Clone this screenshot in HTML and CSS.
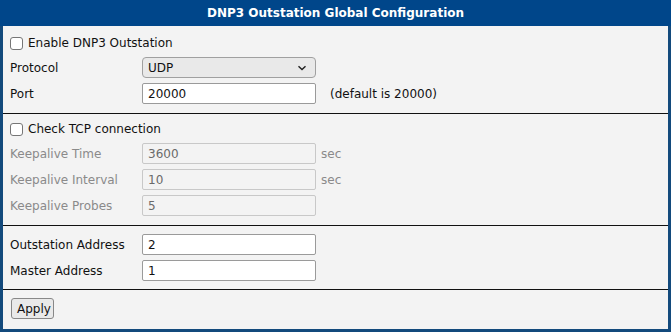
FILE: index.html
```html
<!DOCTYPE html>
<html>
<head>
<meta charset="utf-8">
<link rel="stylesheet" href="styles.css">
</head>
<body>
<div class="panel">
  <div class="header">DNP3 Outstation Global Configuration</div>
  <div class="section s1">
    <label class="check"><span class="box"></span>Enable DNP3 Outstation</label>
    <div class="row">
      <span class="label">Protocol</span>
      <div class="select"><span>UDP</span><svg class="chev" width="10" height="6" viewBox="0 0 10 6"><path d="M1.5 1.2 L5 4.6 L8.5 1.2" fill="none" stroke="#222" stroke-width="1.4"/></svg></div>
    </div>
    <div class="row">
      <span class="label">Port</span>
      <div class="input">20000</div>
      <span class="note">(default is 20000)</span>
    </div>
  </div>
  <div class="section s2">
    <label class="check"><span class="box"></span>Check TCP connection</label>
    <div class="row disabled">
      <span class="label">Keepalive Time</span>
      <div class="input">3600</div>
      <span class="unit">sec</span>
    </div>
    <div class="row disabled">
      <span class="label">Keepalive Interval</span>
      <div class="input">10</div>
      <span class="unit">sec</span>
    </div>
    <div class="row disabled">
      <span class="label">Keepalive Probes</span>
      <div class="input">5</div>
    </div>
  </div>
  <div class="section s3">
    <div class="row">
      <span class="label">Outstation Address</span>
      <div class="input">2</div>
    </div>
    <div class="row">
      <span class="label">Master Address</span>
      <div class="input">1</div>
    </div>
  </div>
  <div class="section s4">
    <button class="btn">Apply</button>
  </div>
</div>
</body>
</html>
```

FILE: styles.css
```css
html, body {
  margin: 0;
  padding: 0;
  background: #ffffff;
}
body {
  font-family: "DejaVu Sans", Verdana, sans-serif;
  font-size: 12px;
  color: #111;
}
.panel {
  width: 671px;
  height: 332px;
  box-sizing: border-box;
  border: 3px solid #134a7c;
  border-top: 0;
  background: #f3f3f3;
  display: flex;
  flex-direction: column;
}
.header {
  height: 26px;
  margin: 0 -3px;
  background: #00468a;
  color: #fff;
  font-weight: bold;
  font-size: 12px;
  display: flex;
  align-items: center;
  justify-content: center;
}
.section {
  display: flex;
  flex-direction: column;
  gap: 5px;
  padding: 0 7px;
  border-bottom: 1px solid #111;
}
.s1 { padding-top: 8px; padding-bottom: 9px; }
.s2 { padding-top: 6px; padding-bottom: 9px; }
.s3 { padding-top: 8px; padding-bottom: 8px; }
.s4 { border-bottom: 0; padding-top: 8px; }
.check {
  display: flex;
  align-items: center;
  height: 18px;
}
.box {
  width: 13px;
  height: 13px;
  box-sizing: border-box;
  border: 1px solid #767676;
  border-radius: 3px;
  background: #fff;
  margin-right: 5px;
}
.row {
  display: flex;
  align-items: center;
  height: 21px;
}
.label {
  width: 132px;
}
.input, .select {
  width: 174px;
  height: 21px;
  box-sizing: border-box;
  border: 1px solid #9a9a9a;
  border-radius: 2px;
  background: #fff;
  display: flex;
  align-items: center;
  padding: 0 5px;
}
.select {
  background: #e9e9e9;
  border-color: #a0a0a0;
  border-radius: 4px;
  justify-content: space-between;
  padding-right: 8px;
}
.disabled .label, .disabled .unit {
  color: #8a8a8a;
}
.disabled .input {
  background: #f3f3f3;
  border-color: #c8c8c8;
  color: #6a6a6a;
}
.unit { margin-left: 5px; }
.note { margin-left: 14px; }
.btn {
  font-family: inherit;
  font-size: 12px;
  height: 21px;
  padding: 0 5px;
  border: 1px solid #888;
  border-radius: 3px;
  background: #e9e9e9;
  color: #111;
  width: 43px;
  margin-left: 1px;
}
```
